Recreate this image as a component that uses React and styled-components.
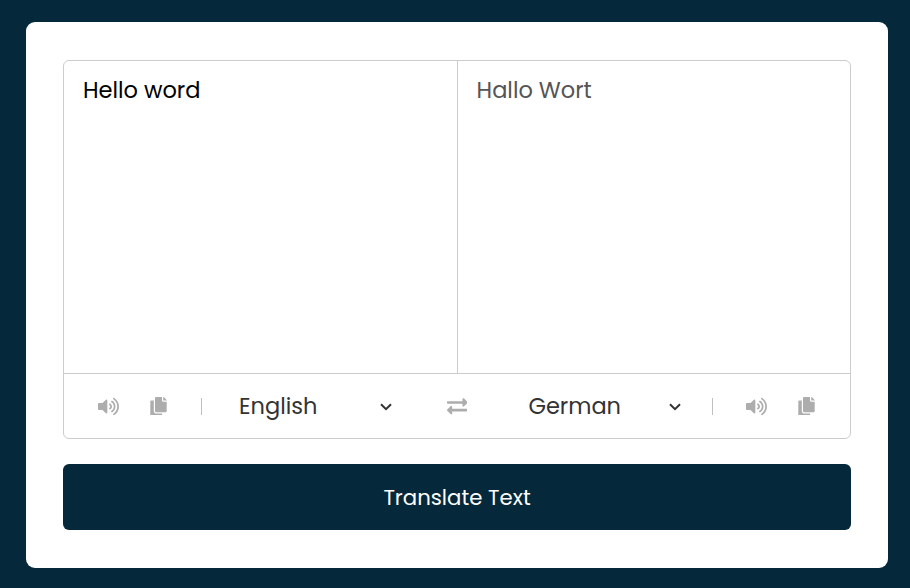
import React from "react";
import styled, { createGlobalStyle } from "styled-components";
import { FaVolumeUp, FaCopy, FaExchangeAlt } from "react-icons/fa";

const navy = "#05283b";

const GlobalStyle = createGlobalStyle`
  * { box-sizing: border-box; margin: 0; padding: 0; }
  body { background: ${navy}; overflow: hidden; }
  body, button { font-family: Poppins, "Open Sans", sans-serif; }
`;

const Page = styled.main`
  height: 588px;
  padding: 22px 22px 20px 26px;
`;

const Card = styled.section`
  height: 546px;
  padding: 38px 37px;
  border-radius: 9px;
  background: #fff;
`;

const Wrapper = styled.div`
  height: 379px;
  border: 1px solid #ccc;
  border-radius: 6px;
`;

const Texts = styled.div`
  display: grid;
  grid-template-columns: 394px 1fr;
  height: 313px;
  border-bottom: 1px solid #ccc;
`;

const Pane = styled.div`
  padding: 12px ${(p) => (p.$muted ? "18.6px" : "19px")};
  font-size: 22.5px;
  line-height: 34px;
  color: ${(p) => (p.$muted ? "#555" : "#000")};
  border-right: ${(p) => (p.$muted ? "0" : "1px solid #ccc")};
`;

const Controls = styled.div`
  display: grid;
  grid-template-columns: 138px 226px 58px 226px 1fr;
  height: 64px;
  align-items: center;
  color: #adadad;
`;

const Tools = styled.div`
  display: flex;
  align-items: center;
  height: 17px;
  padding-left: ${(p) => (p.$end ? "33px" : "34px")};
  border-left: ${(p) => (p.$end ? "1px solid #bfbfbf" : "0")};
  border-right: ${(p) => (p.$end ? "0" : "1px solid #bfbfbf")};
`;

const IconButton = styled.button`
  display: flex;
  width: ${(p) => p.$width}px;
  justify-content: center;
  margin-right: ${(p) => p.$gap || 0}px;
  border: 0;
  background: none;
  color: inherit;
`;

const LanguageSelect = styled.button`
  display: flex;
  align-items: center;
  justify-content: space-between;
  padding: 0 ${(p) => p.$right}px 0 ${(p) => p.$left}px;
  border: 0;
  background: none;
  color: #333;
  font-size: 22.5px;
  line-height: 34px;
`;

const Chevron = styled.svg`
  width: 12px;
  height: 8px;
  margin-top: 2px;
  fill: none;
  stroke: #333;
  stroke-width: 2;
`;

const TranslateButton = styled.button`
  display: block;
  width: 100%;
  height: 66px;
  margin-top: 25px;
  padding-top: 1px;
  border: 0;
  border-radius: 6px;
  background: ${navy};
  color: #fff;
  font-size: 21.25px;
`;

function TextTools({ gap }) {
  return (
    <>
      <IconButton $width={21} $gap={gap} aria-label="Listen"><FaVolumeUp size={21} /></IconButton>
      <IconButton $width={17} aria-label="Copy"><FaCopy size={18.75} /></IconButton>
    </>
  );
}

function Language({ name, left, right }) {
  return (
    <LanguageSelect $left={left} $right={right}>
      {name}
      <Chevron viewBox="0 0 12 8"><path d="M1 1.2 6 6.2l5-5" /></Chevron>
    </LanguageSelect>
  );
}

export default function App() {
  return (
    <>
      <GlobalStyle />
      <Page>
        <Card>
          <Wrapper>
            <Texts>
              <Pane>Hello word</Pane>
              <Pane $muted>Hallo Wort</Pane>
            </Texts>
            <Controls>
              <Tools><TextTools gap={30.5} /></Tools>
              <Language name="English" left={37} right={36} />
              <IconButton $width={58} aria-label="Swap languages"><FaExchangeAlt size={20.6} /></IconButton>
              <Language name="German" left={42.4} right={31} />
              <Tools $end><TextTools gap={31} /></Tools>
            </Controls>
          </Wrapper>
          <TranslateButton>Translate Text</TranslateButton>
        </Card>
      </Page>
    </>
  );
}
